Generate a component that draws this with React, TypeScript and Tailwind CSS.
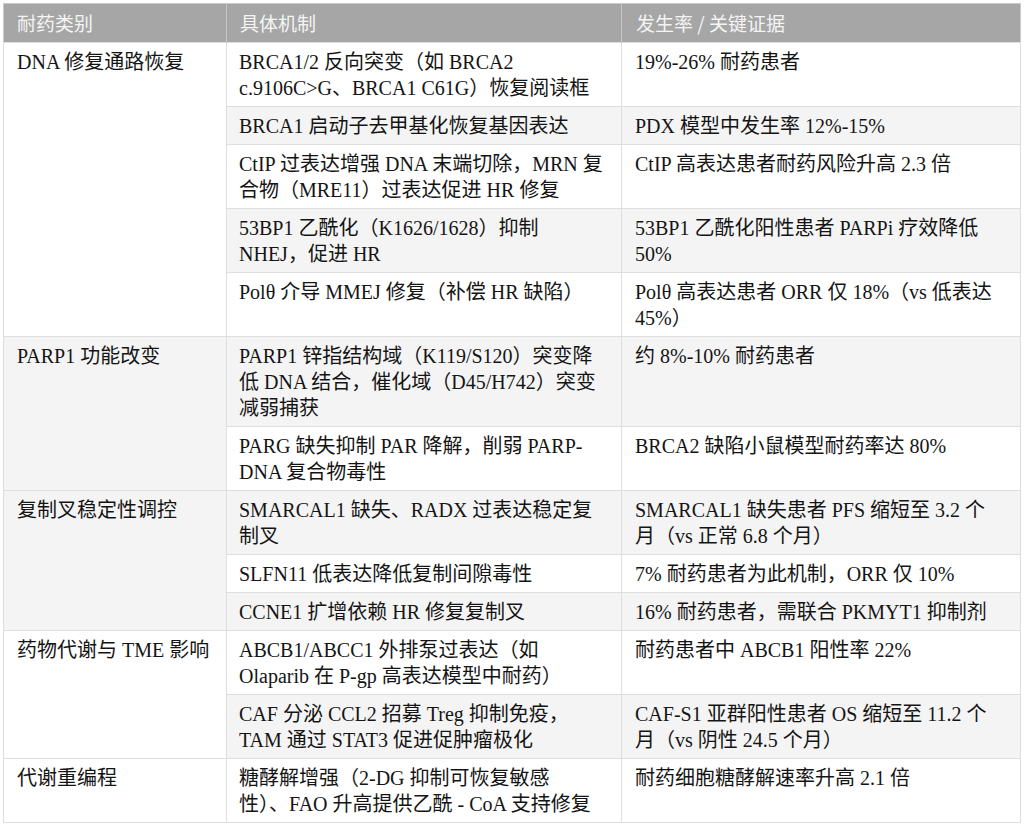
const groups = [
  {
    category: 'DNA 修复通路恢复',
    rows: [
      {
        mechanism: ['BRCA1/2 反向突变（如 BRCA2', 'c.9106C>G、BRCA1 C61G）恢复阅读框'],
        evidence: ['19%-26% 耐药患者'],
      },
      { mechanism: ['BRCA1 启动子去甲基化恢复基因表达'], evidence: ['PDX 模型中发生率 12%-15%'] },
      {
        mechanism: ['CtIP 过表达增强 DNA 末端切除，MRN 复', '合物（MRE11）过表达促进 HR 修复'],
        evidence: ['CtIP 高表达患者耐药风险升高 2.3 倍'],
      },
      {
        mechanism: ['53BP1 乙酰化（K1626/1628）抑制', 'NHEJ，促进 HR'],
        evidence: ['53BP1 乙酰化阳性患者 PARPi 疗效降低', '50%'],
      },
      {
        mechanism: ['Polθ 介导 MMEJ 修复（补偿 HR 缺陷）'],
        evidence: ['Polθ 高表达患者 ORR 仅 18%（vs 低表达', '45%）'],
      },
    ],
  },
  {
    category: 'PARP1 功能改变',
    rows: [
      {
        mechanism: ['PARP1 锌指结构域（K119/S120）突变降', '低 DNA 结合，催化域（D45/H742）突变', '减弱捕获'],
        evidence: ['约 8%-10% 耐药患者'],
      },
      {
        mechanism: ['PARG 缺失抑制 PAR 降解，削弱 PARP-', 'DNA 复合物毒性'],
        evidence: ['BRCA2 缺陷小鼠模型耐药率达 80%'],
      },
    ],
  },
  {
    category: '复制叉稳定性调控',
    rows: [
      {
        mechanism: ['SMARCAL1 缺失、RADX 过表达稳定复', '制叉'],
        evidence: ['SMARCAL1 缺失患者 PFS 缩短至 3.2 个', '月（vs 正常 6.8 个月）'],
      },
      { mechanism: ['SLFN11 低表达降低复制间隙毒性'], evidence: ['7% 耐药患者为此机制，ORR 仅 10%'] },
      { mechanism: ['CCNE1 扩增依赖 HR 修复复制叉'], evidence: ['16% 耐药患者，需联合 PKMYT1 抑制剂'] },
    ],
  },
  {
    category: '药物代谢与 TME 影响',
    rows: [
      {
        mechanism: ['ABCB1/ABCC1 外排泵过表达（如', 'Olaparib 在 P-gp 高表达模型中耐药）'],
        evidence: ['耐药患者中 ABCB1 阳性率 22%'],
      },
      {
        mechanism: ['CAF 分泌 CCL2 招募 Treg 抑制免疫，', 'TAM 通过 STAT3 促进促肿瘤极化'],
        evidence: ['CAF-S1 亚群阳性患者 OS 缩短至 11.2 个', '月（vs 阴性 24.5 个月）'],
      },
    ],
  },
  {
    category: '代谢重编程',
    rows: [
      {
        mechanism: ['糖酵解增强（2-DG 抑制可恢复敏感', '性）、FAO 升高提供乙酰 - CoA 支持修复'],
        evidence: ['耐药细胞糖酵解速率升高 2.1 倍'],
      },
    ],
  },
];

function Lines({ lines }: { lines: string[] }) {
  return (
    <>
      {lines.map((line) => (
        <div key={line} className="whitespace-nowrap">
          {line}
        </div>
      ))}
    </>
  );
}

export default function App() {
  let index = 0;
  return (
    <div className="min-h-screen bg-white pl-[3px] pt-[3px]">
      <table
        className="w-[1017px] table-fixed border-collapse border border-[#cbcbcb] text-[20px] leading-[26px] text-[#141414]"
        style={{ fontFamily: '"Liberation Serif", "Noto Sans CJK SC", serif' }}
      >
        <colgroup>
          <col className="w-[223px]" />
          <col className="w-[395px]" />
          <col className="w-[399px]" />
        </colgroup>
        <thead>
          <tr className="h-[39px] bg-[#a6a6a6] text-[#f4f4f4] text-[19px] font-normal">
            <th className="border-r border-[#c6c6c6] pl-[13px] text-left font-normal" style={{ fontFamily: '"Noto Sans CJK SC", sans-serif' }}>
              耐药类别
            </th>
            <th className="border-r border-[#c6c6c6] pl-[13px] text-left font-normal" style={{ fontFamily: '"Noto Sans CJK SC", sans-serif' }}>
              具体机制
            </th>
            <th className="pl-[14px] text-left font-normal" style={{ fontFamily: '"Noto Sans CJK SC", sans-serif' }}>
              发生率 / 关键证据
            </th>
          </tr>
        </thead>
        <tbody>
          {groups.map((group) =>
            group.rows.map((row, i) => {
              const striped = index++ % 2 === 1;
              const bg = striped ? 'bg-[#f4f4f4]' : 'bg-white';
              return (
                <tr key={group.category + i} className={bg}>
                  {i === 0 && (
                    <td
                      rowSpan={group.rows.length}
                      className={`${bg} border border-[#dedede] px-[13px] pt-[6px] pb-[5px] align-top`}
                    >
                      {group.category}
                    </td>
                  )}
                  <td className="border border-[#dedede] px-[12px] pt-[6px] pb-[5px] align-top">
                    <Lines lines={row.mechanism} />
                  </td>
                  <td className="border border-[#dedede] pl-[13px] pr-[10px] pt-[6px] pb-[5px] align-top">
                    <Lines lines={row.evidence} />
                  </td>
                </tr>
              );
            })
          )}
        </tbody>
      </table>
    </div>
  );
}
